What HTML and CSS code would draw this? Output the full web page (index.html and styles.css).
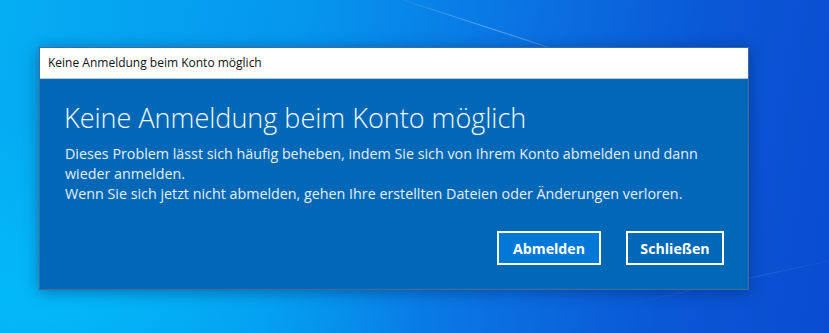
FILE: index.html
```html
<!DOCTYPE html>
<html lang="de">
<head>
<meta charset="utf-8">
<title>Keine Anmeldung beim Konto möglich</title>
<link rel="stylesheet" href="styles.css">
</head>
<body>
<div class="desktop">
  <div class="beam beam-1"></div>
  <div class="beam beam-2"></div>
  <div class="dialog">
    <div class="titlebar">Keine Anmeldung beim Konto möglich</div>
    <div class="content">
      <h1 class="heading">Keine Anmeldung beim Konto möglich</h1>
      <p class="message">Dieses Problem lässt sich häufig beheben, indem Sie sich von Ihrem Konto abmelden und dann wieder anmelden.<br>Wenn Sie sich jetzt nicht abmelden, gehen Ihre erstellten Dateien oder Änderungen verloren.</p>
      <div class="actions">
        <button class="btn btn-primary">Abmelden</button>
        <button class="btn btn-secondary">Schließen</button>
      </div>
    </div>
  </div>
</div>
</body>
</html>
```

FILE: styles.css
```css
html, body {
  margin: 0;
  padding: 0;
  width: 829px;
  height: 333px;
  overflow: hidden;
}

.desktop {
  position: relative;
  width: 829px;
  height: 333px;
  box-sizing: border-box;
  padding: 47px 0 0 39px;
  background:
    radial-gradient(ellipse 520px 260px at 60px 300px, rgba(0, 200, 255, 0.55), rgba(0, 200, 255, 0) 70%),
    linear-gradient(100deg, #05aef3 0%, #0596ee 35%, #0a72e2 60%, #0a58d6 80%, #0a4ccf 100%);
  font-family: "Open Sans", "Noto Sans", sans-serif;
  overflow: hidden;
}

.beam {
  position: absolute;
  height: 1px;
  background: linear-gradient(90deg, rgba(255,255,255,0), rgba(255,255,255,0.35), rgba(255,255,255,0));
  transform-origin: 0 0;
}
.beam-1 {
  left: 380px;
  top: -8px;
  width: 240px;
  transform: rotate(18deg);
}
.beam-2 {
  left: 620px;
  top: 305px;
  width: 240px;
  transform: rotate(-12deg);
  opacity: 0.35;
}

.dialog {
  position: relative;
  width: 710px;
  border: 1px solid #3f6c9a;
  box-shadow: 0 2px 14px rgba(0, 30, 80, 0.45);
  box-sizing: border-box;
}

.titlebar {
  height: 31px;
  box-sizing: border-box;
  background: #ffffff;
  border-bottom: 1px solid #b9c6d4;
  color: #111;
  font-size: 12px;
  line-height: 30px;
  padding-left: 8px;
}

.content {
  background: #0068b6;
  height: 210px;
  box-sizing: border-box;
  padding: 21px 24px 24px 24px;
  color: #fff;
  display: flex;
  flex-direction: column;
}

.heading {
  margin: 0;
  font-weight: 300;
  font-size: 27px;
  line-height: 36px;
  color: #f4f8fc;
}

.message {
  margin: 8px 0 0 1px;
  font-size: 14.3px;
  line-height: 20px;
  color: #e6eef7;
}

.actions {
  display: flex;
  justify-content: flex-end;
  gap: 25px;
  margin-top: auto;
}

.btn {
  height: 34px;
  box-sizing: border-box;
  border: 2px solid #ffffff;
  background: #0068b6;
  color: #fff;
  font-family: "Open Sans", "Noto Sans", sans-serif;
  font-weight: 700;
  font-size: 14.2px;
  padding: 0;
}

.btn-primary {
  background: #0078d7;
  width: 104px;
}

.btn-secondary {
  width: 98px;
}
```
